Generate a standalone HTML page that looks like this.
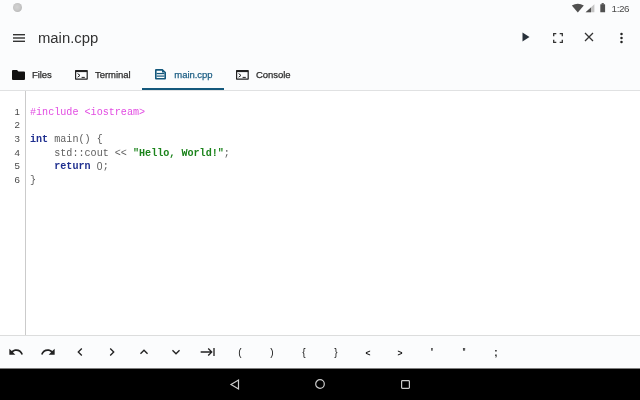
<!DOCTYPE html>
<html><head><meta charset="utf-8">
<style>
*{margin:0;padding:0;box-sizing:border-box}
html,body{width:640px;height:400px;overflow:hidden;background:#fbfcfd;font-family:"Liberation Sans",sans-serif;color:#222}
.abs{position:absolute}
#status{position:absolute;left:0;top:0;width:640px;height:16px;background:#fbfcfd}
#dot{position:absolute;left:12.5px;top:3.2px;width:9px;height:9px;border-radius:50%;background:radial-gradient(circle at 45% 45%,#d2d2d2 0%,#c8c8c8 45%,#a9a9a9 100%)}
#time{position:absolute;left:611.6px;top:2.8px;font-size:9.9px;line-height:12px;color:#4a4a4a;letter-spacing:-0.4px}
#title{position:absolute;left:38px;top:29px;font-size:14.85px;color:#333;line-height:18px}
.tab{position:absolute;top:69.2px;font-size:9.5px;line-height:12px;color:#2c2c2c;letter-spacing:-0.05px;-webkit-text-stroke:0.25px currentColor}
#tabline{position:absolute;left:0;top:90px;width:640px;height:1px;background:#e0e1e2}
#tabsel{position:absolute;left:142px;top:88px;width:82px;height:2px;background:#14587c}
#editor{position:absolute;left:0;top:91px;width:640px;height:244px;background:#fff}
#gutter{position:absolute;left:25px;top:91px;width:1px;height:244px;background:#cbcbcb}
.ln{position:absolute;left:0;width:20px;text-align:right;font-family:"Liberation Sans",sans-serif;font-size:9.7px;line-height:13.6px;color:#4a4a4a}
.code{position:absolute;left:30px;font-family:"Liberation Mono",monospace;font-size:10.1px;line-height:13.6px;white-space:pre;color:#606060}
.pp{color:#e24ce2}.kw{color:#1f2f8f;font-weight:bold}.st{color:#1c841c;font-weight:bold}
#bbar{position:absolute;left:0;top:335px;width:640px;height:34px;background:#fbfcfd;border-top:1px solid #dcdddd}
.sym{position:absolute;top:346px;width:20px;text-align:center;font-size:10px;line-height:14px;color:#111;font-family:"Liberation Sans",sans-serif}
#nav{position:absolute;left:0;top:368px;width:640px;height:32px;background:#000;border-top:1px solid #7e7e7e}
svg{position:absolute;overflow:visible}
#wrap{position:absolute;left:0;top:0;width:640px;height:400px;opacity:0.999;will-change:opacity}
</style></head><body><div id="status"></div><div id="editor"></div><div id="bbar"></div><div id="nav"></div>
<div id="wrap">
<div id="dot"></div>
<div id="time">1:26</div>
<svg style="left:571px;top:3px" width="40" height="10" viewBox="0 0 40 10">
 <path d="M0.8 2.6 Q6.8 -0.9 12.8 2.6 L6.8 9.4 Z" fill="#505050"/>
 <path d="M23.4 1.3 L23.4 9.3 L14.6 9.3 Z" fill="#c4c4c4"/><path d="M20 4.4 L20 9.3 L14.6 9.3 Z" fill="#505050"/>
 <rect x="29.3" y="1.2" width="4.8" height="8.1" rx="0.4" fill="#505050"/><rect x="30.6" y="0.1" width="2.2" height="1.5" fill="#505050"/>
</svg>
<!-- hamburger -->
<svg style="left:12.5px;top:33.6px" width="12" height="8"><rect y="0" width="12" height="1.4" fill="#333"/><rect y="3.3" width="12" height="1.4" fill="#333"/><rect y="6.6" width="12" height="1.4" fill="#333"/></svg>
<div id="title">main.cpp</div>
<!-- appbar icons -->
<svg style="left:522px;top:32.4px" width="8" height="10"><path d="M0.5 0.5 L7.5 5 L0.5 9.5 Z" fill="#27303a"/></svg>
<svg style="left:552.5px;top:32.5px" width="10" height="10" fill="none" stroke="#333" stroke-width="1.3"><path d="M0.7 3.3V0.7H3.3M6.7 0.7H9.3V3.3M9.3 6.7V9.3H6.7M3.3 9.3H0.7V6.7"/></svg>
<svg style="left:584px;top:32.4px" width="10" height="10" fill="none" stroke="#333" stroke-width="1.3"><path d="M1 1L9 9M9 1L1 9"/></svg>
<svg style="left:619.5px;top:31.5px" width="3" height="12" fill="#222"><circle cx="1.5" cy="1.9" r="1.25"/><circle cx="1.5" cy="6" r="1.25"/><circle cx="1.5" cy="10.1" r="1.25"/></svg>
<!-- tabs -->
<svg style="left:12px;top:70px" width="13" height="10"><path d="M0 1 Q0 0 1 0 H5 L6.5 1.5 H12 Q13 1.5 13 2.5 V9 Q13 10 12 10 H1 Q0 10 0 9 Z" fill="#111"/></svg>
<div class="tab" style="left:32px">Files</div>
<svg style="left:74.7px;top:69.7px" width="13" height="10" fill="none" stroke="#222" stroke-width="1.2"><rect x="0.6" y="0.6" width="11.6" height="8.6" rx="0.2"/><path d="M0.6 1.2H12.2" stroke-width="1.8"/><path d="M2.6 3.6L5 5.4L2.6 7.2M6.6 7.4H9.8" stroke-width="1"/></svg>
<div class="tab" style="left:95px">Terminal</div>
<svg style="left:155px;top:69px" width="11" height="10.6" viewBox="0 0 11 10.6"><path d="M1 0 H7.6 L11 3.2 V9.6 Q11 10.6 10 10.6 H1 Q0 10.6 0 9.6 V1 Q0 0 1 0 Z" fill="#14587c"/><path d="M1.6 1.7 H7 V3.6 H9.4 V9 H1.6 Z" fill="#fff"/><rect x="1.6" y="3.9" width="7.8" height="1.3" fill="#14587c"/><rect x="1.6" y="6.5" width="7.8" height="1.2" fill="#14587c"/></svg>
<div class="tab" style="left:174.3px;color:#1d5f85">main.cpp</div>
<svg style="left:236px;top:69.7px" width="13" height="10" fill="none" stroke="#222" stroke-width="1.2"><rect x="0.6" y="0.6" width="11.6" height="8.6" rx="0.2"/><path d="M0.6 1.2H12.2" stroke-width="1.8"/><path d="M2.6 3.6L5 5.4L2.6 7.2M6.6 7.4H9.8" stroke-width="1"/></svg>
<div class="tab" style="left:256px">Console</div>
<div id="tabline"></div><div id="tabsel"></div>
<div id="gutter"></div>
<div class="ln" style="top:104.6px">1</div>
<div class="ln" style="top:118.2px">2</div>
<div class="ln" style="top:131.8px">3</div>
<div class="ln" style="top:146px">4</div>
<div class="ln" style="top:159.0px">5</div>
<div class="ln" style="top:172.6px">6</div>
<div class="code" style="top:105.8px"><span class="pp">#include &lt;iostream&gt;</span></div>
<div class="code" style="top:133.0px"><span class="kw">int</span> main() {</div>
<div class="code" style="top:146.6px">    std::cout &lt;&lt; <span class="st">"Hello, World!"</span>;</div>
<div class="code" style="top:160.2px">    <span class="kw">return</span> <span style="font-family:'Liberation Sans',sans-serif;display:inline-block;width:6.06px;text-align:center;font-size:10.3px;line-height:13.6px;vertical-align:top">0</span>;</div>
<div class="code" style="top:173.8px">}</div>

<svg style="left:8px;top:344px" width="16" height="16" viewBox="0 0 24 24"><path d="M12.5 8c-2.65 0-5.05.99-6.9 2.6L2 7v9h9l-3.62-3.62c1.39-1.16 3.16-1.88 5.12-1.88 3.54 0 6.55 2.31 7.6 5.5l2.37-.78C21.08 11.03 17.15 8 12.5 8z" fill="#222"/></svg>
<svg style="left:40px;top:344px" width="16" height="16" viewBox="0 0 24 24"><path d="M18.4 10.6C16.55 8.99 14.15 8 11.5 8c-4.65 0-8.58 3.03-9.96 7.22L3.9 16c1.05-3.19 4.05-5.5 7.6-5.5 1.95 0 3.73.72 5.12 1.88L13 16h9V7l-3.6 3.6z" fill="#222"/></svg>
<svg style="left:72px;top:344px" width="16" height="16" viewBox="0 0 24 24"><path d="M15.41 7.41L14 6l-6 6 6 6 1.41-1.41L10.83 12z" fill="#222"/></svg>
<svg style="left:104px;top:344px" width="16" height="16" viewBox="0 0 24 24"><path d="M10 6L8.59 7.41 13.17 12l-4.58 4.59L10 18l6-6z" fill="#222"/></svg>
<svg style="left:136px;top:344px" width="16" height="16" viewBox="0 0 24 24"><path d="M12 8l-6 6 1.41 1.41L12 10.83l4.59 4.58L18 14z" fill="#222"/></svg>
<svg style="left:168px;top:344px" width="16" height="16" viewBox="0 0 24 24"><path d="M16.59 8.59L12 13.17 7.41 8.59 6 10l6 6 6-6z" fill="#222"/></svg>
<svg style="left:200px;top:344px" width="16" height="16" viewBox="0 0 24 24"><path d="M11.59 7.41L15.17 11H1v2h14.17l-3.59 3.59L13 18l6-6-6-6-1.41 1.41zM20 6v12h2V6h-2z" fill="#222"/></svg>
<div class="sym" style="left:230px">(</div>
<div class="sym" style="left:262px">)</div>
<div class="sym" style="left:294px">{</div>
<div class="sym" style="left:326px">}</div>
<div class="sym" style="left:358px;top:345.5px;font-size:8.5px;font-weight:bold">&lt;</div>
<div class="sym" style="left:390px;top:345.5px;font-size:8.5px;font-weight:bold">&gt;</div>
<div class="sym" style="left:422px;font-weight:bold">'</div>
<div class="sym" style="left:454px;transform:scaleX(0.65);font-weight:bold">"</div>
<div class="sym" style="left:486px;font-weight:bold">;</div>

<svg style="left:230px;top:379px" width="10" height="11" fill="none" stroke="#ccc" stroke-width="1.2"><path d="M8.5 1 V10 L1 5.5 Z"/></svg>
<svg style="left:315px;top:379px" width="10" height="10" fill="none" stroke="#ccc" stroke-width="1.2"><circle cx="5" cy="5" r="4.3"/></svg>
<svg style="left:401px;top:380px" width="9" height="9" fill="none" stroke="#ccc" stroke-width="1.2"><rect x="0.6" y="0.6" width="7.8" height="7.8" rx="0.8"/></svg>
</div></body></html>
